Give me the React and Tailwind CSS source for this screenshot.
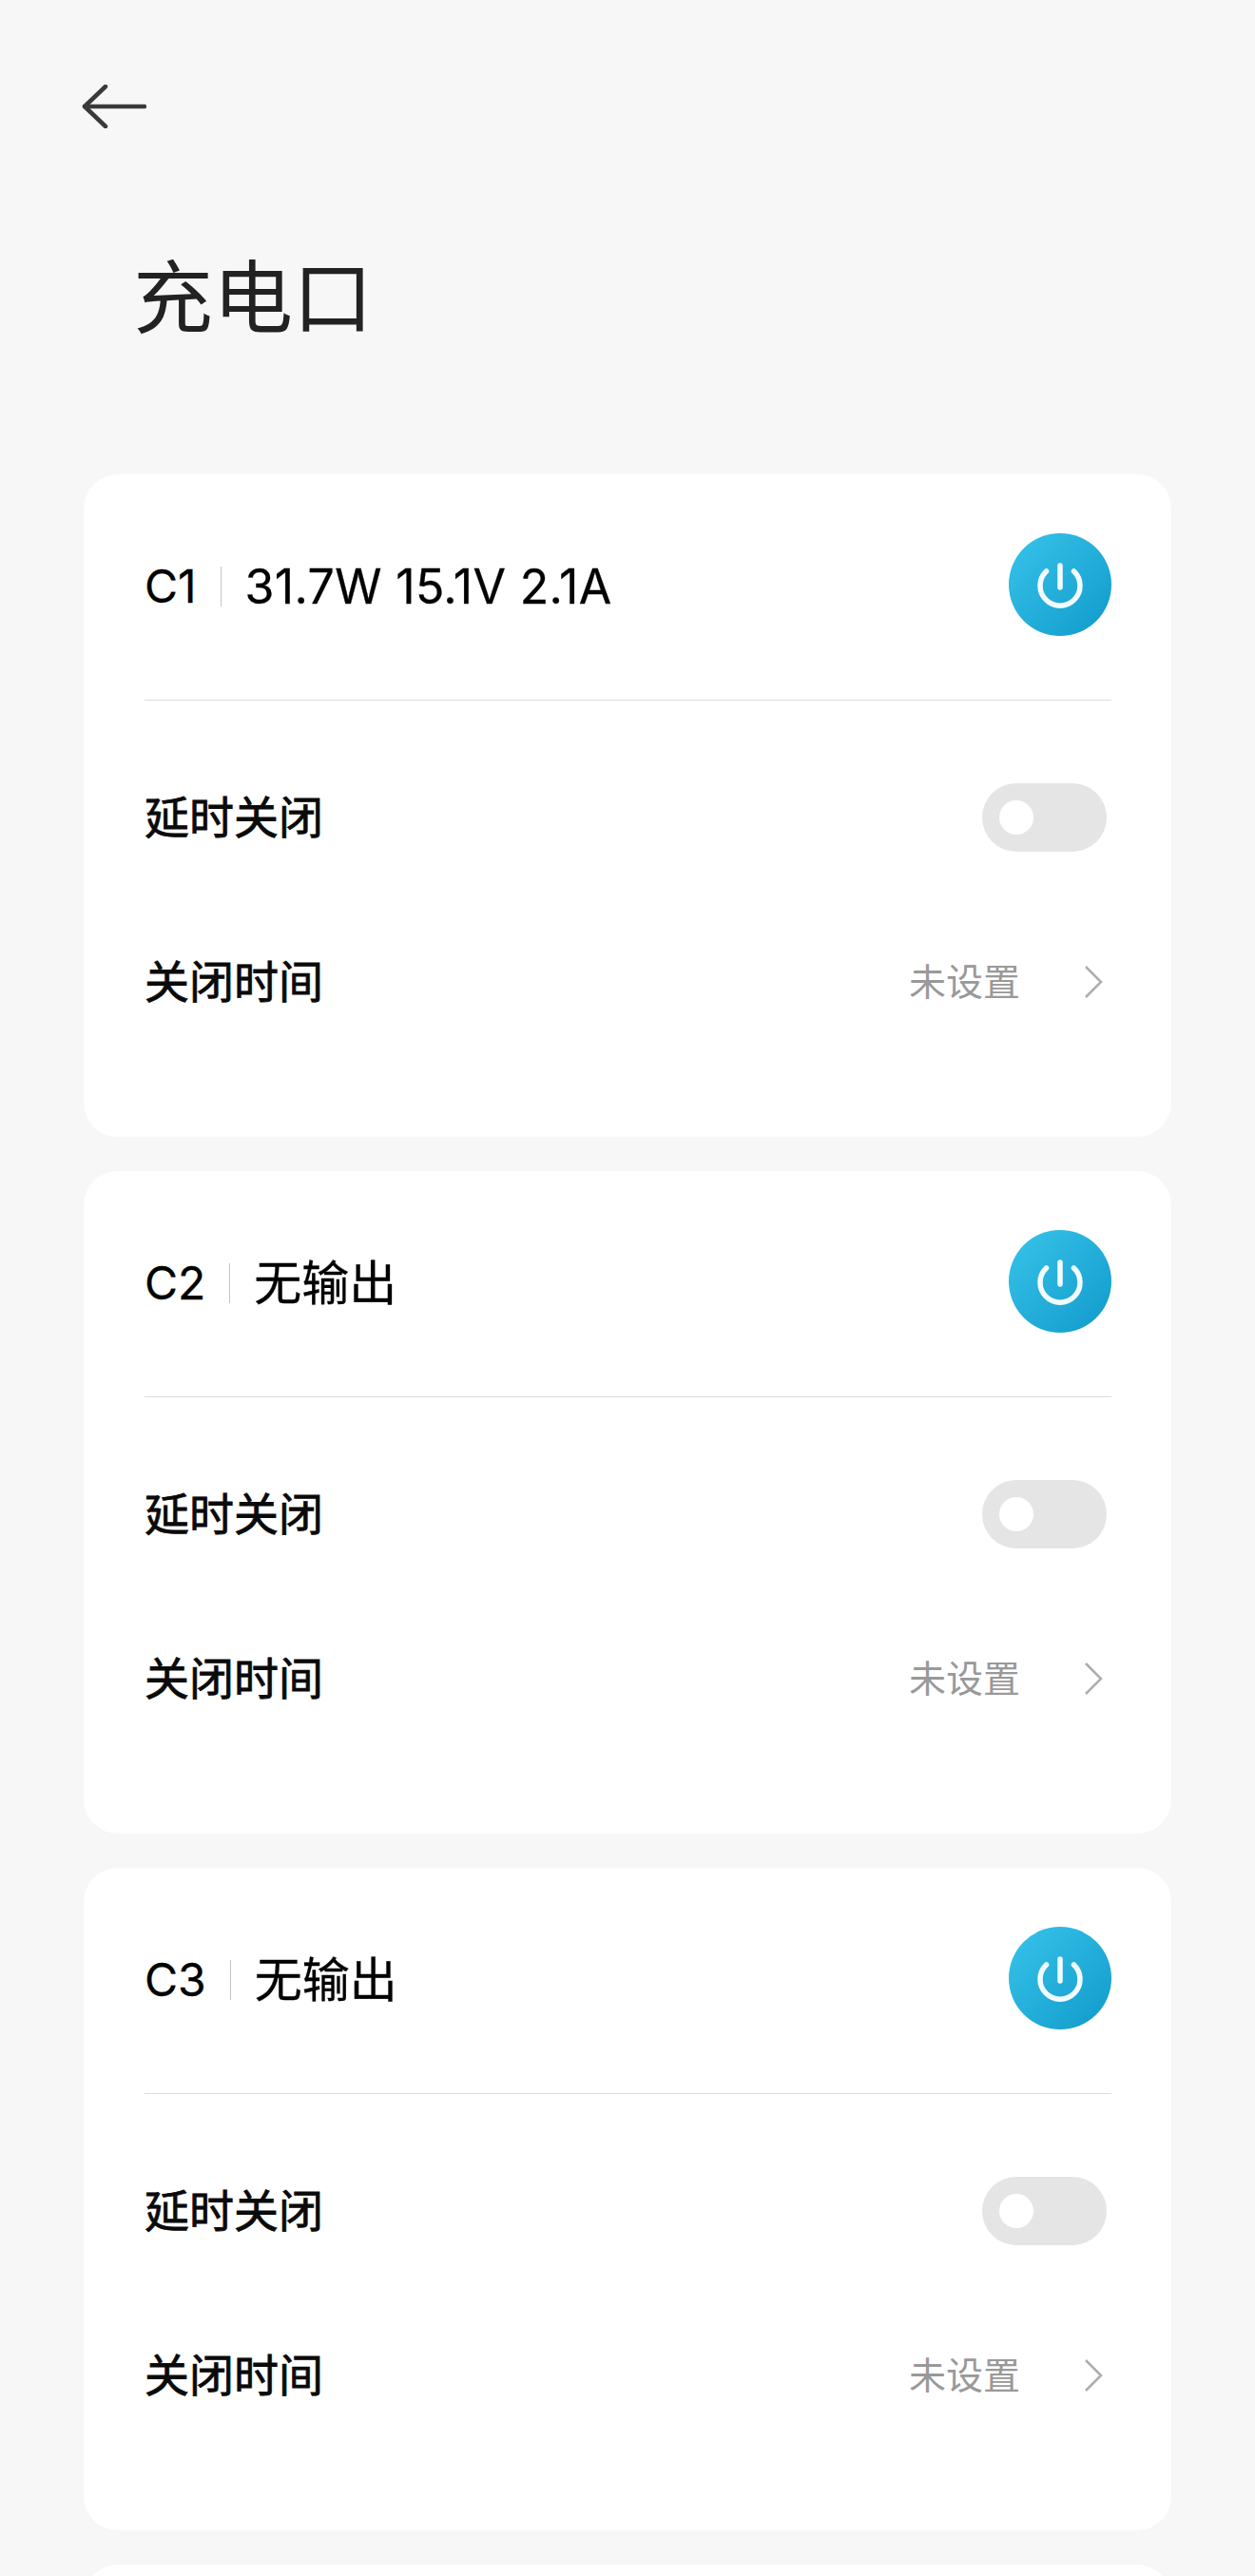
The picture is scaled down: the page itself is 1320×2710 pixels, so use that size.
import React from "react";

const fontStack = "font-['Inter','Noto_Sans_CJK_SC',sans-serif]";

const ports = [
  { name: "C1", status: "31.7W 15.1V 2.1A", size: "text-[50px] tracking-[0.35px]" },
  { name: "C2", status: "无输出", size: "text-[50px]" },
  { name: "C3", status: "无输出", size: "text-[50px]" },
];

const PowerButton = () => (
  <div className="flex h-[108px] w-[108px] items-center justify-center rounded-full bg-gradient-to-br from-[#36c4ea] to-[#0e9acb]">
    <svg width="50" height="50" viewBox="0 0 50 50" fill="none" stroke="#f2fbfe" strokeWidth="5.5" strokeLinecap="round">
      <path d="M25 5V28" />
      <path d="M10.5 11A21 21 0 1 0 39.5 11" />
    </svg>
  </div>
);

const PortCard = ({ name, status, size }) => (
  <div className="rounded-[36px] bg-white pb-[77px] pl-[64px] pr-[63px]">
    <div className="flex h-[232px] items-center justify-between border-b border-[#dcdcdc] pb-[5px] box-content">
      <div className="mt-[3px] flex items-center leading-none text-black [-webkit-text-stroke:0.3px_#000000]">
        <span className="text-[48px] leading-none">{name}</span>
        <span className="mx-[25px] h-[42px] w-px bg-[#c4c4c4]" />
        <span className={`${size} leading-none`}>{status}</span>
      </div>
      <PowerButton />
    </div>
    <div className="pt-[36px]">
      <div className="flex h-[173px] items-center justify-between">
        <span className="text-[47px] leading-none text-[#0a0a0a] [-webkit-text-stroke:0.8px_#0a0a0a]">延时关闭</span>
        <div className="mr-[5px] flex h-[72px] w-[131px] items-center rounded-full bg-[#e5e5e5] pl-[18px]">
          <div className="h-[36px] w-[36px] rounded-full bg-white" />
        </div>
      </div>
      <div className="flex h-[173px] items-center justify-between">
        <span className="text-[47px] leading-none text-[#0a0a0a] [-webkit-text-stroke:0.8px_#0a0a0a]">关闭时间</span>
        <div className="flex items-center">
          <span className="text-[39px] leading-none text-[#999999]">未设置</span>
          <svg className="ml-[67px] mr-[9px]" width="20" height="34" viewBox="0 0 20 34" fill="none" stroke="#adadad" strokeWidth="2.5">
            <path d="M2 1L18 17L2 33" />
          </svg>
        </div>
      </div>
    </div>
  </div>
);

export default function App() {
  return (
    <div className={`h-[2710px] overflow-hidden bg-[#f7f7f7] px-[88px] pt-[89px] ${fontStack}`}>
      <svg className="-ml-[2px]" width="68" height="46" viewBox="0 0 68 46" fill="none" stroke="#3a3a3a" strokeWidth="4.5" strokeLinecap="round" strokeLinejoin="round">
        <path d="M3 23H66" />
        <path d="M25 2L3 23L25 44" />
      </svg>
      <h1 className="mt-[137px] ml-[52px] text-[84px] font-normal leading-[84px] text-[#222222]">充电口</h1>
      <div className="mt-[143px] flex flex-col gap-[36px]">
        {ports.map((port) => (
          <PortCard key={port.name} name={port.name} status={port.status} size={port.size} />
        ))}
        <div className="h-[697px] rounded-[36px] bg-white" />
      </div>
    </div>
  );
}
